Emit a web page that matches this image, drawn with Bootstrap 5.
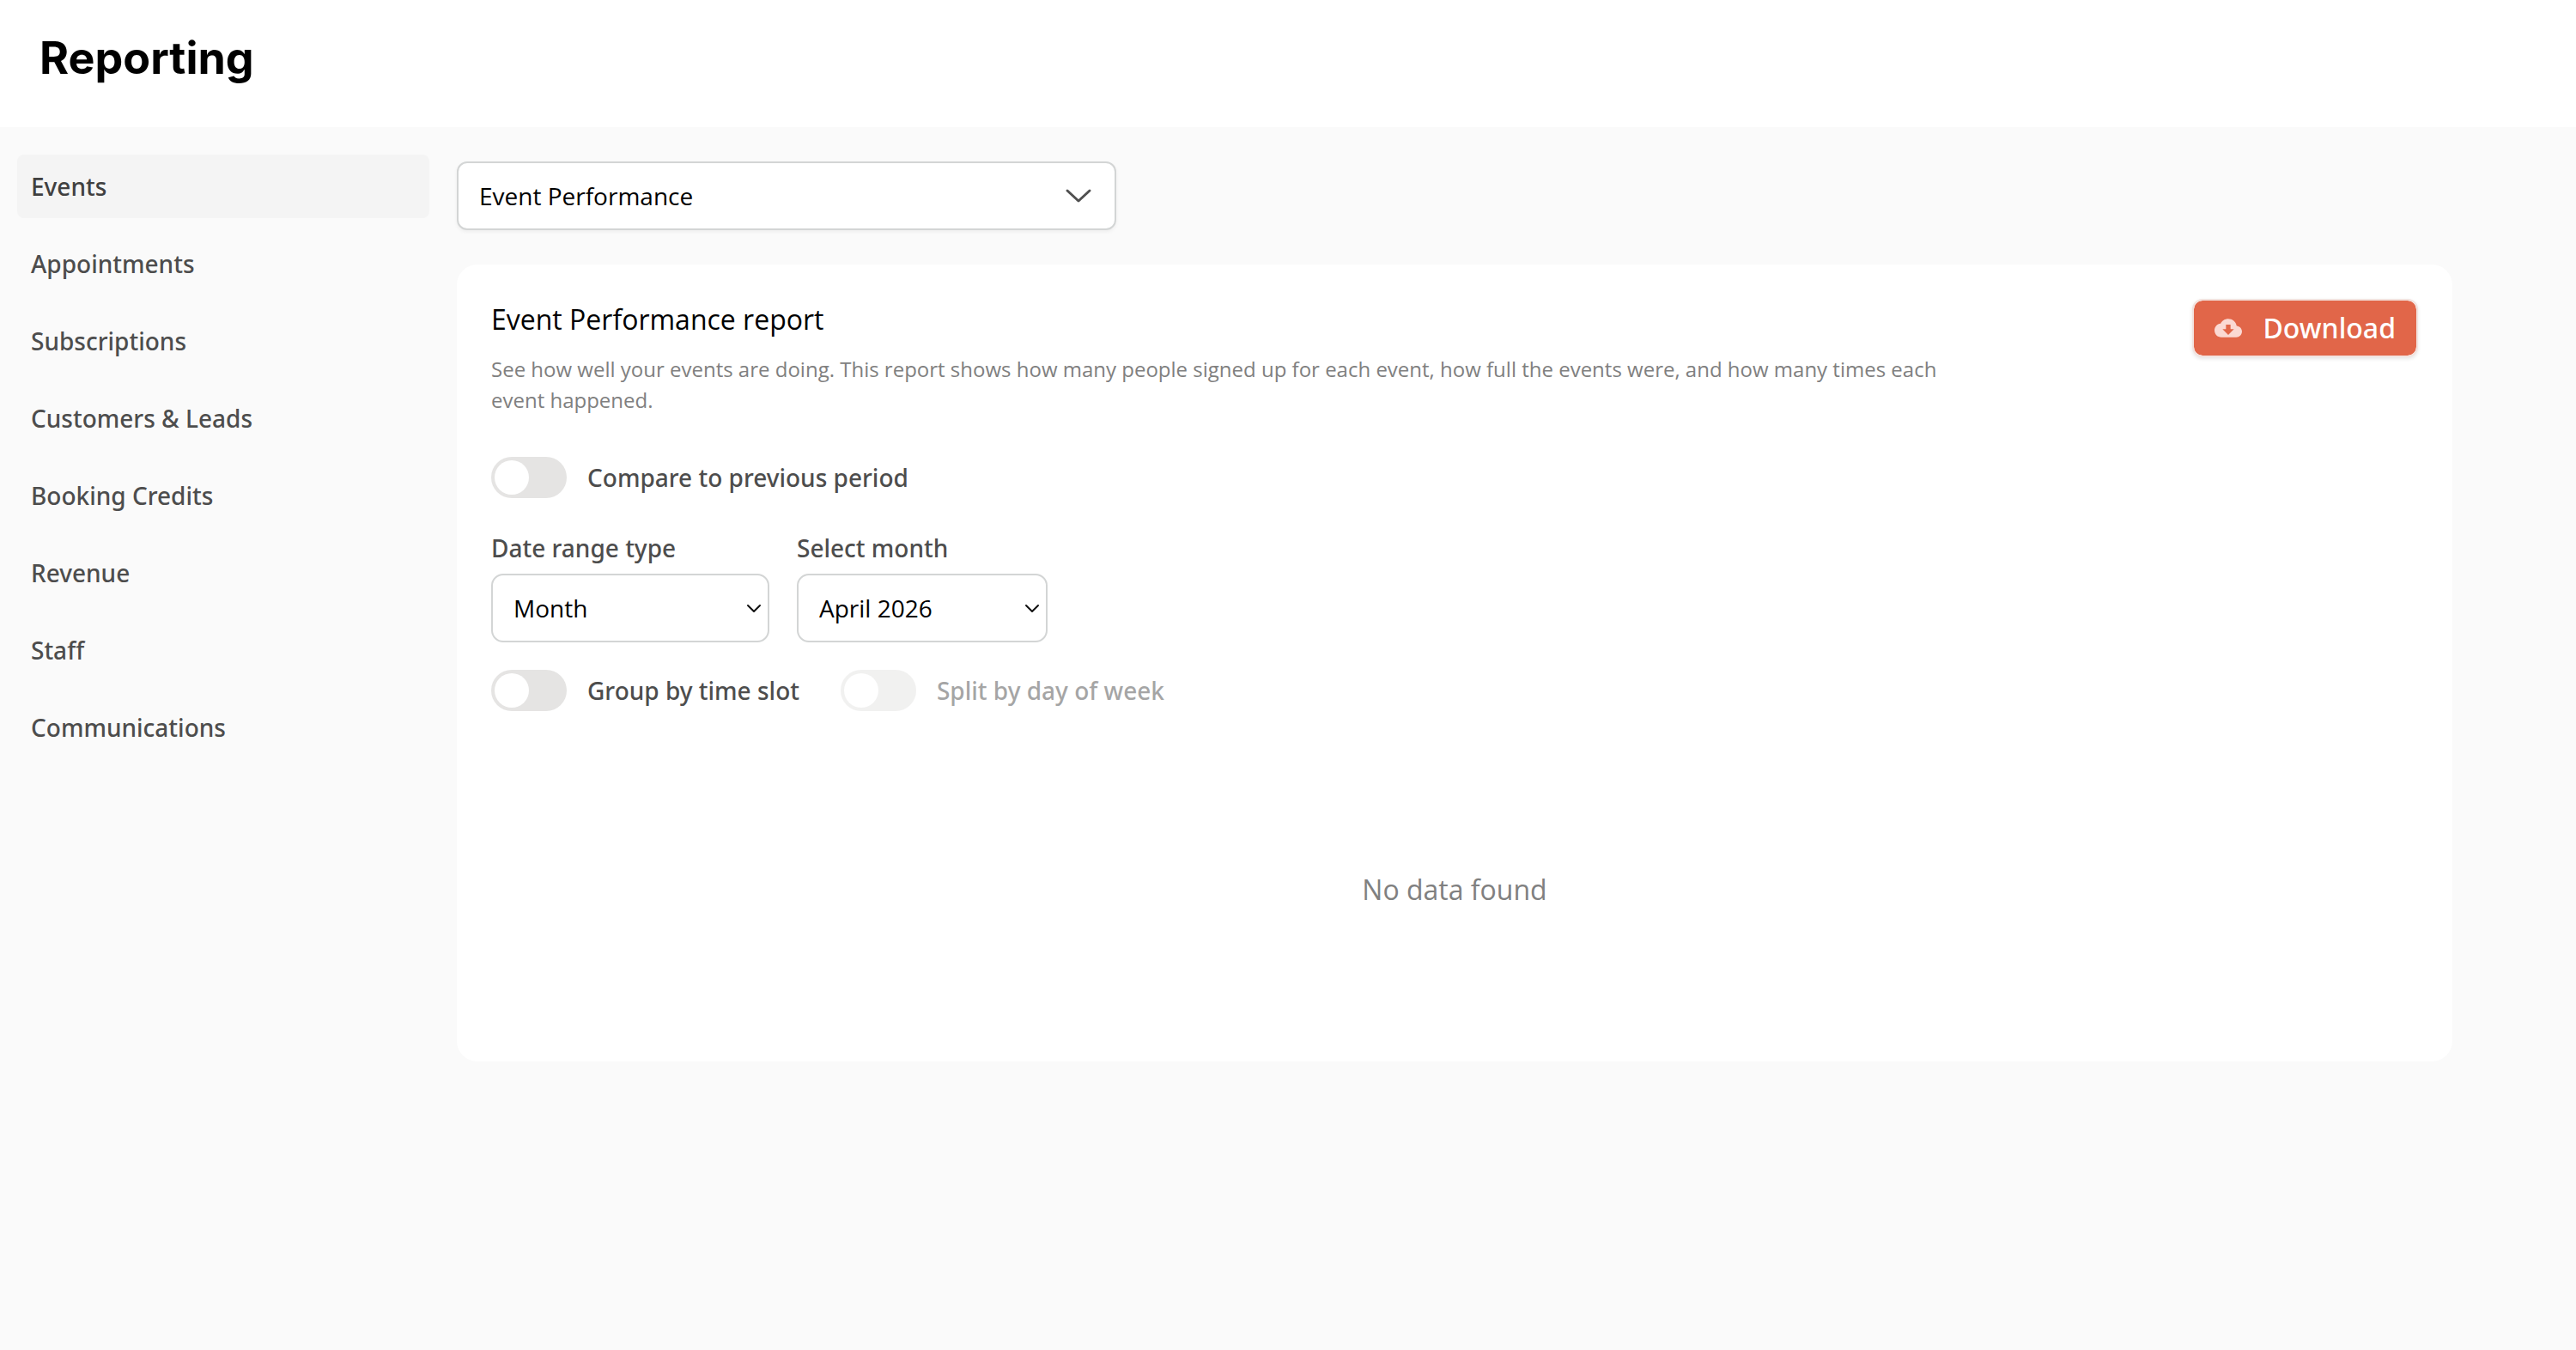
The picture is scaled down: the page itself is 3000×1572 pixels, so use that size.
<!DOCTYPE html>
<html lang="en">
<head>
<meta charset="utf-8">
<meta name="viewport" content="width=device-width, initial-scale=1">
<title>Reporting</title>
<link href="https://cdn.jsdelivr.net/npm/bootstrap@5.3.0/dist/css/bootstrap.min.css" rel="stylesheet">
<style>
  body { background: #fafafa; color: #000; font-family: "Open Sans", "Noto Sans", sans-serif; font-size: 28px; line-height: 40px; }
  .page-head { padding: 38px 46px 50px; }
  .page-title { font-family: Inter, sans-serif; font-size: 52px; line-height: 60px; font-weight: 700; }
  .side-nav { width: 480px; gap: 16px; }
  .side-nav .nav-link, .field-label, .btn-download { font-family: "Noto Sans", "Open Sans", sans-serif; font-weight: 500; }
  .side-nav .nav-link { color: #4d4d4d; line-height: 42px; padding: 16px; border-radius: 8px; }
  .side-nav .nav-link.active { background: #f4f4f4; color: #404040; }
  .layout { padding: 32px 144px 48px 20px; gap: 32px; }
  .report-picker { width: 768px; max-width: 100%; }
  .field-box { height: 80px; color: #000; font-size: 28px; line-height: 40px; padding: 0 48px 0 24px; border: 2px solid #d3d5d5; border-radius: 14px; background-color: #fff; background-repeat: no-repeat; }
  .field-main { box-shadow: 0 2px 4px rgba(0,0,0,.05); border-radius: 12px; background-size: 32px 32px; background-position: right 26px center;
    background-image: url("data:image/svg+xml,%3Csvg xmlns='http://www.w3.org/2000/svg' viewBox='0 0 32 32' fill='none' stroke='%23505050' stroke-width='3' stroke-linecap='round' stroke-linejoin='round'%3E%3Cpath d='M3 10 16 22 29 10'/%3E%3C/svg%3E"); }
  .field-small { background-size: 20px 20px; background-position: right 6px center;
    background-image: url("data:image/svg+xml,%3Csvg xmlns='http://www.w3.org/2000/svg' viewBox='0 0 20 20' fill='none' stroke='%23111' stroke-width='2' stroke-linecap='round' stroke-linejoin='round'%3E%3Cpath d='M3 7 10 14 17 7'/%3E%3C/svg%3E"); }
  .report-card { border-radius: 24px; margin-top: 40px; padding: 40px 40px 176px; }
  .report-title { font-size: 32px; line-height: 48px; font-weight: 400; }
  .report-text { color: #808080; font-size: 24px; line-height: 36px; max-width: 1700px; }
  .field-row { gap: 32px; margin-top: 38px; }
  .field-range { width: 324px; }
  .field-month { width: 292px; }
  .field-label { color: #4d4d4d; }
  .field-row .field-label { margin-bottom: 10px; }
  .btn-download { height: 68px; padding: 0 24px; gap: 24px; border: 2px solid #f3e3df; border-radius: 12px; background: #e16649; background-clip: padding-box; color: #fff; font-size: 32px; box-shadow: 0 2px 4px rgba(0,0,0,.1); }
  .btn-download:hover { background: #cf5a3f; color: #fff; }
  .toggle { min-height: 48px; padding: 0; gap: 24px; }
  .toggle-row { gap: 48px; margin-top: 32px; }
  .toggle .form-check-input { float: none; width: 88px; height: 48px; margin: 0; border: 0; background-color: #e5e4e3; border-radius: 24px; background-size: 44px 44px; background-position: 2px center;
    background-image: url("data:image/svg+xml,%3Csvg xmlns='http://www.w3.org/2000/svg' viewBox='0 0 44 44'%3E%3Ccircle cx='22' cy='22' r='20' fill='white'/%3E%3C/svg%3E"); }
  .toggle .form-check-input:checked { background-color: #e16649; background-position: 42px center; }
  .empty-note { color: #808080; font-size: 32px; line-height: 48px; padding-top: 184px; }
</style>
</head>
<body>
<header class="page-head bg-white">
  <h1 class="page-title m-0">Reporting</h1>
</header>
<div class="layout d-flex align-items-start">
  <nav class="side-nav nav flex-column flex-shrink-0" aria-label="Reports">
    <a class="nav-link active" aria-current="page" href="#">Events</a>
    <a class="nav-link" href="#">Appointments</a>
    <a class="nav-link" href="#">Subscriptions</a>
    <a class="nav-link" href="#">Customers &amp; Leads</a>
    <a class="nav-link" href="#">Booking Credits</a>
    <a class="nav-link" href="#">Revenue</a>
    <a class="nav-link" href="#">Staff</a>
    <a class="nav-link" href="#">Communications</a>
  </nav>
  <main class="flex-grow-1 pt-2">
    <div class="report-picker">
      <select class="form-select field-box field-main" aria-label="Report">
        <option>Event Performance</option>
      </select>
    </div>
    <section class="report-card bg-white">
      <div class="d-flex justify-content-between align-items-start gap-4">
        <div>
          <h2 class="report-title m-0">Event Performance report</h2>
          <p class="report-text mb-0 mt-3">See how well your events are doing. This report shows how many people signed up for each event, how full the events were, and how many times each event happened.</p>
        </div>
        <button type="button" class="btn btn-download d-flex align-items-center flex-shrink-0">
          <svg width="32" height="32" viewBox="0 0 24 24" aria-hidden="true"><path fill="#fbd9d3" d="M19.350 10.040C18.670 6.590 15.640 4 12 4 9.110 4 6.600 5.640 5.350 8.040 2.340 8.360 0 10.910 0 14c0 3.310 2.690 6 6 6h13c2.760 0 5-2.240 5-5 0-2.640-2.050-4.780-4.650-4.960zM17 13l-5 5-5-5h3V9h4v4h3z"/></svg>
          Download
        </button>
      </div>
      <div class="toggle form-check form-switch d-flex align-items-center mt-5 mb-0">
        <input class="form-check-input" type="checkbox" role="switch" id="compare">
        <label class="form-check-label field-label" for="compare">Compare to previous period</label>
      </div>
      <div class="field-row d-flex">
        <div class="field-range">
          <label class="field-label d-block" for="rangeType">Date range type</label>
          <select class="form-select field-box field-small" id="rangeType"><option>Month</option></select>
        </div>
        <div class="field-month">
          <label class="field-label d-block" for="month">Select month</label>
          <select class="form-select field-box field-small" id="month"><option>April 2026</option></select>
        </div>
      </div>
      <div class="toggle-row d-flex">
        <div class="toggle form-check form-switch d-flex align-items-center m-0">
          <input class="form-check-input" type="checkbox" role="switch" id="slot">
          <label class="form-check-label field-label" for="slot">Group by time slot</label>
        </div>
        <div class="toggle form-check form-switch d-flex align-items-center m-0">
          <input class="form-check-input" type="checkbox" role="switch" id="dow" disabled>
          <label class="form-check-label field-label" for="dow">Split by day of week</label>
        </div>
      </div>
      <p class="empty-note text-center m-0">No data found</p>
    </section>
  </main>
</div>
<script src="https://cdn.jsdelivr.net/npm/bootstrap@5.3.0/dist/js/bootstrap.bundle.min.js"></script>
</body>
</html>
